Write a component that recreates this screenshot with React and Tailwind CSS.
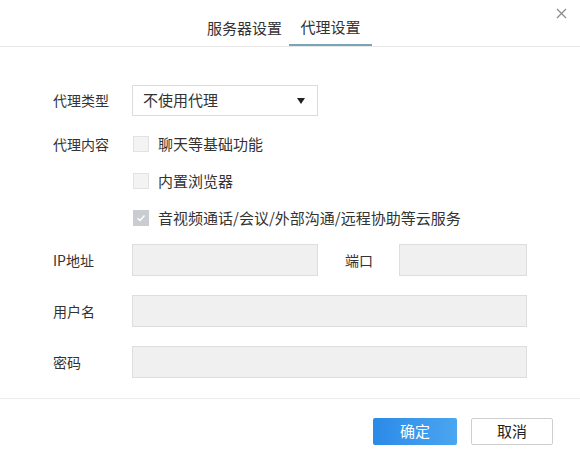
import React, { useState } from "react";

const font = { fontFamily: '"Noto Sans CJK SC", "Noto Sans", sans-serif' };

function Checkbox({ checked, label }) {
    return (
        <label className="flex items-center h-[16px]">
            <span
                className={
                    "w-[16px] h-[16px] flex items-center justify-center border " +
                    (checked ? "bg-[#c9cdd1] border-[#c9cdd1]" : "bg-[#f3f3f3] border-[#e2e2e2]")
                }
            >
                {checked && (
                    <svg width="10" height="10" viewBox="0 0 10 10">
                        <path d="M1.5 5.2 L4 7.5 L8.5 2.5" fill="none" stroke="#fff" strokeWidth="1.4" />
                    </svg>
                )}
            </span>
            <span className="ml-[9px] text-[15px] text-[#333]">{label}</span>
        </label>
    );
}

export default function App() {
    const [tab] = useState(1);

    return (
        <div className="w-[580px] h-[464px] bg-white flex flex-col" style={font}>
            <div className="relative h-[47px] border-b border-[#e8e8e8] flex items-end">
                <div className="flex ml-[198px]">
                    <div className="w-[93px] h-[46px] flex items-center justify-center text-[15px] text-[#333] pt-[10px]">
                        服务器设置
                    </div>
                    <div className="w-[83px] h-[46px] flex items-center justify-center text-[15px] text-[#333] pt-[10px] border-b-2 border-[#79a6b6] mb-[-1px] ml-[-2px]">
                        代理设置
                    </div>
                </div>
                <svg className="absolute right-[13px] top-[8px]" width="11" height="11" viewBox="0 0 11 11">
                    <path d="M1 1 L10 10 M10 1 L1 10" stroke="#8a8a8a" strokeWidth="1.2" />
                </svg>
            </div>

            <div className="flex-1 pl-[53px] pr-[53px] pt-[38px] text-[14px] text-[#333]">
                <div className="flex items-center">
                    <div className="w-[79px]">代理类型</div>
                    <div className="w-[186px] h-[31px] border border-[#dcdcdc] bg-white flex items-center justify-between pl-[10px] pr-[12px]">
                        <span className="text-[15px]">不使用代理</span>
                        <svg width="8" height="6" viewBox="0 0 8 6">
                            <path d="M0 0 H8 L4 6 Z" fill="#222" />
                        </svg>
                    </div>
                </div>

                <div className="flex mt-[20px]">
                    <div className="w-[80px] leading-[16px]">代理内容</div>
                    <div className="flex flex-col gap-[21px]">
                        <Checkbox label="聊天等基础功能" />
                        <Checkbox label="内置浏览器" />
                        <Checkbox checked label="音视频通话/会议/外部沟通/远程协助等云服务" />
                    </div>
                </div>

                <div className="flex items-center mt-[18px]">
                    <div className="w-[79px]">IP地址</div>
                    <div className="w-[186px] h-[32px] bg-[#f0f0f0] border border-[#dedede]" />
                    <div className="w-[54px] ml-[27px]">端口</div>
                    <div className="w-[128px] h-[32px] bg-[#f0f0f0] border border-[#dedede]" />
                </div>

                <div className="flex items-center mt-[19px]">
                    <div className="w-[79px]">用户名</div>
                    <div className="w-[395px] h-[32px] bg-[#f0f0f0] border border-[#dedede]" />
                </div>

                <div className="flex items-center mt-[19px]">
                    <div className="w-[79px]">密码</div>
                    <div className="w-[395px] h-[32px] bg-[#f0f0f0] border border-[#dedede]" />
                </div>
            </div>

            <div className="h-[66px] border-t border-[#ececec] flex justify-end items-start pt-[19px] pr-[27px] gap-[14px]">
                <button className="w-[84px] h-[27px] rounded-[2px] bg-gradient-to-r from-[#2b8ae8] to-[#4aa6f0] text-white text-[15px] flex items-center justify-center">
                    确定
                </button>
                <button className="w-[82px] h-[27px] rounded-[2px] border border-[#cfcfcf] bg-white text-[#222] text-[15px] flex items-center justify-center">
                    取消
                </button>
            </div>
        </div>
    );
}
